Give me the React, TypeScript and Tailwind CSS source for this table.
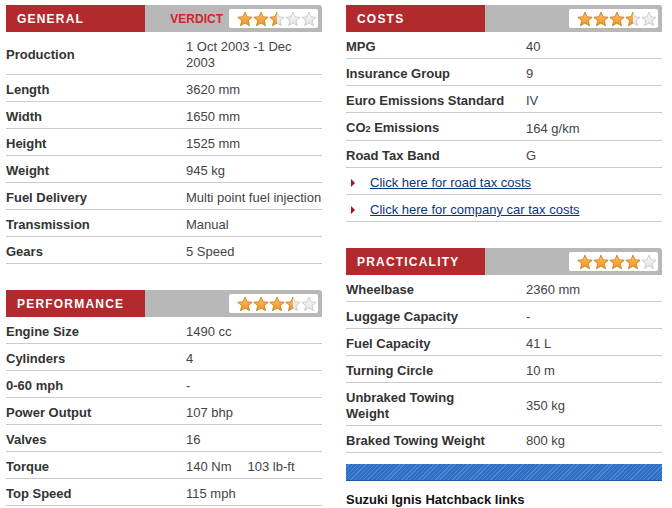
import { useId, type ReactNode } from 'react';

const STAR_PATH =
  'M8 1.2 L10 5.9 L15.1 6.3 L11.2 9.6 L12.4 14.6 L8 11.9 L3.6 14.6 L4.8 9.6 L0.9 6.3 L6 5.9 Z';

function Star({ fill }: { fill: number }) {
  const id = useId().replace(/:/g, '');
  return (
    <svg width="16" height="16" viewBox="0 0 16 16" className="block">
      <defs>
        <linearGradient id={`g${id}`} x1="0" y1="0" x2="0" y2="1">
          <stop offset="0%" stopColor="#fcc56a" />
          <stop offset="100%" stopColor="#f0901e" />
        </linearGradient>
        <linearGradient id={`e${id}`} x1="0" y1="0" x2="0" y2="1">
          <stop offset="0%" stopColor="#fafafa" />
          <stop offset="100%" stopColor="#e2e2e2" />
        </linearGradient>
        <clipPath id={`c${id}`}>
          <rect x="0" y="0" width={16 * fill} height="16" />
        </clipPath>
      </defs>
      <path d={STAR_PATH} fill={`url(#e${id})`} stroke="#c8c8c8" strokeWidth="0.9" strokeLinejoin="round" />
      {fill > 0 && (
        <path
          d={STAR_PATH}
          fill={`url(#g${id})`}
          stroke="#d9821f"
          strokeWidth="0.9"
          strokeLinejoin="round"
          clipPath={`url(#c${id})`}
        />
      )}
    </svg>
  );
}

function Stars({ rating }: { rating: number }) {
  return (
    <div className="flex items-center justify-end pr-[1px] w-[89px] h-[19px] bg-white rounded-[2px]">
      {[0, 1, 2, 3, 4].map((i) => (
        <Star key={i} fill={Math.max(0, Math.min(1, rating - i))} />
      ))}
    </div>
  );
}

function Header({ title, rating, verdict }: { title: string; rating: number; verdict?: boolean }) {
  return (
    <div className="flex h-[27px] rounded-tr-[3px] overflow-hidden bg-[#b8b8b8]">
      <div className="w-[139px] bg-[#b22a2e] text-white font-bold text-[12px] tracking-[1.2px] pl-[11px] flex items-center">
        {title}
      </div>
      <div className="flex-1 flex items-center justify-end pr-[4px]">
        {verdict && (
          <span className="text-[#d2232a] font-bold text-[12px] mr-[6px]">VERDICT</span>
        )}
        <Stars rating={rating} />
      </div>
    </div>
  );
}

function Row({ label, children }: { label: ReactNode; children?: ReactNode }) {
  return (
    <div className="flex items-center border-b border-[#cccccc] pt-[7px] pb-[3px] leading-[16px]">
      <div className="w-[180px] shrink-0 font-bold text-[13px] text-[#333333]">{label}</div>
      <div className="flex-1 text-[13px] text-[#444444]">{children}</div>
    </div>
  );
}

function LinkRow({ text }: { text: string }) {
  return (
    <div className="flex items-center border-b border-[#cccccc] pt-[7px] pb-[3px] leading-[16px]">
      <svg width="4" height="8" viewBox="0 0 4 8" className="ml-[5px] mr-[15px]">
        <polygon points="0,0 4,4 0,8" fill="#b00d12" />
      </svg>
      <a href="#" className="text-[13px] text-[#0a3580] underline">
        {text}
      </a>
    </div>
  );
}

export default function App() {
  return (
    <div className="w-[672px] h-[508px] bg-white overflow-hidden font-['Liberation_Sans',Arial,sans-serif] flex gap-[24px] pl-[6px] pt-[5px]">
      {/* Left column */}
      <div className="w-[316px]">
        <Header title="GENERAL" rating={2.5} verdict />
        <Row label="Production">
          1 Oct 2003 -1 Dec
          <br />
          2003
        </Row>
        <Row label="Length">3620 mm</Row>
        <Row label="Width">1650 mm</Row>
        <Row label="Height">1525 mm</Row>
        <Row label="Weight">945 kg</Row>
        <Row label="Fuel Delivery">Multi point fuel injection</Row>
        <Row label="Transmission">Manual</Row>
        <Row label="Gears">5 Speed</Row>

        <div className="mt-[26px]">
          <Header title="PERFORMANCE" rating={3.5} />
          <Row label="Engine Size">1490 cc</Row>
          <Row label="Cylinders">4</Row>
          <Row label="0-60 mph">-</Row>
          <Row label="Power Output">107 bhp</Row>
          <Row label="Valves">16</Row>
          <Row label="Torque">
            140 Nm<span className="ml-[16px]">103 lb-ft</span>
          </Row>
          <Row label="Top Speed">115 mph</Row>
        </div>
      </div>

      {/* Right column */}
      <div className="w-[316px]">
        <Header title="COSTS" rating={3.5} />
        <Row label="MPG">40</Row>
        <Row label="Insurance Group">9</Row>
        <Row label="Euro Emissions Standard">IV</Row>
        <Row
          label={
            <>
              CO<span className="text-[9px]">2</span> Emissions
            </>
          }
        >
          164 g/km
        </Row>
        <Row label="Road Tax Band">G</Row>
        <LinkRow text="Click here for road tax costs" />
        <LinkRow text="Click here for company car tax costs" />

        <div className="mt-[26px]">
          <Header title="PRACTICALITY" rating={4} />
          <Row label="Wheelbase">2360 mm</Row>
          <Row label="Luggage Capacity">-</Row>
          <Row label="Fuel Capacity">41 L</Row>
          <Row label="Turning Circle">10 m</Row>
          <Row
            label={
              <>
                Unbraked Towing
                <br />
                Weight
              </>
            }
          >
            350 kg
          </Row>
          <Row label="Braked Towing Weight">800 kg</Row>
        </div>

        <div className="mt-[11px] h-[17px] border-b border-[#1d56a2] bg-[repeating-linear-gradient(135deg,#2f6fc3_0px,#2f6fc3_2px,#4a88d6_2px,#4a88d6_3px)]" />
        <div className="mt-[9px] font-bold text-[13px] text-[#111111]">Suzuki Ignis Hatchback links</div>
      </div>
    </div>
  );
}
